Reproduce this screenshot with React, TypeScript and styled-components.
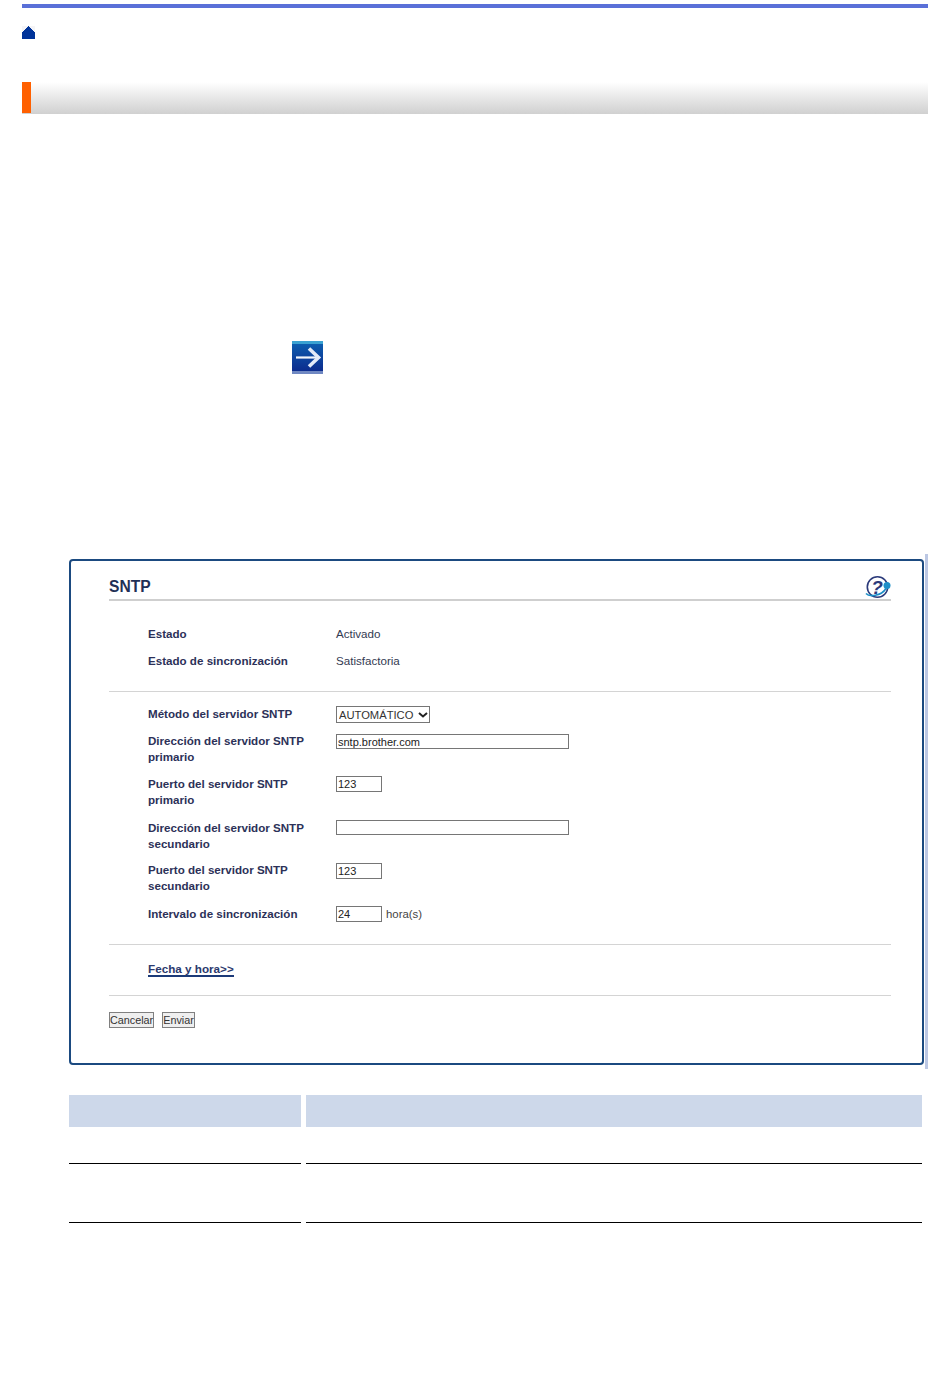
import React from "react";
import styled, { createGlobalStyle } from "styled-components";

const GlobalStyle = createGlobalStyle`
  html, body {
    margin: 0;
    padding: 0;
    background: #fff;
  }
  body {
    font-family: "Liberation Sans", Arial, sans-serif;
  }
`;

const Page = styled.div`
  box-sizing: border-box;
  width: 950px;
  min-height: 1387px;
  padding: 4px 22px 0;
`;

const TopBar = styled.div`
  height: 4px;
  background: #5a70d8;
`;

const HomeLink = styled.div`
  display: flex;
  margin-top: 18px;
  height: 13px;
`;

const TitleBar = styled.div`
  display: flex;
  margin-top: 43px;
  height: 32px;
  background: linear-gradient(#fff, #d0d0d0);
`;

const TitleMark = styled.div`
  width: 9px;
  height: 31px;
  background: #ff6000;
`;

const StepIcon = styled.div`
  display: flex;
  margin: 227px 0 0 270px;
  height: 33px;
`;

const PanelFrame = styled.div`
  box-sizing: border-box;
  width: 859px;
  margin: 180px 0 0 47px;
  padding: 5px 0 4px;
  border-right: 3px solid #bcc8e4;
`;

const Panel = styled.section`
  box-sizing: border-box;
  width: 855px;
  height: 506px;
  padding: 0 31px 0 38px;
  border: 2px solid #1b4a80;
  border-radius: 4px;
`;

const PanelHeader = styled.header`
  display: flex;
  justify-content: space-between;
  align-items: flex-end;
  height: 38px;
  border-bottom: 2px solid #cfcfcf;
`;

const PanelTitle = styled.h2`
  margin: 0 0 2px;
  font-size: 15.600px;
  line-height: 20px;
  font-weight: 700;
  color: #1f3056;
`;

const HelpMark = styled.text`
  font-family: "Liberation Sans", Arial, sans-serif;
  font-size: 19px;
  font-style: italic;
  font-weight: 700;
  fill: #2b3a7a;
  text-anchor: middle;
`;

const StatusBlock = styled.div`
  padding: 25px 0 22px;
  border-bottom: 1px solid #d4d4d4;
`;

const FormBlock = styled.div`
  padding: 14px 0 22px;
  border-bottom: 1px solid #d4d4d4;
`;

const Row = styled.div<{ $top?: number }>`
  display: grid;
  grid-template-columns: 188px 1fr;
  margin-top: ${(p) => p.$top ?? 0}px;
  padding-left: 39px;
`;

const Label = styled.div`
  display: flex;
  flex-direction: column;
  font-size: 11.600px;
  line-height: 16px;
  font-weight: 700;
  color: #2c3158;
`;

const Value = styled.div`
  font-size: 11.600px;
  line-height: 16px;
  color: #333a52;
`;

const Field = styled.div<{ $top: number }>`
  display: flex;
  align-items: flex-start;
  margin-top: ${(p) => p.$top}px;
`;

const SelectWrap = styled.div`
  position: relative;
  display: flex;
  width: 94px;
  height: 17px;
`;

const ModeSelect = styled.select`
  box-sizing: border-box;
  width: 100%;
  height: 100%;
  padding: 0 0 0 2px;
  appearance: none;
  font-family: "Liberation Sans", Arial, sans-serif;
  font-size: 11.200px;
  color: #333;
  background: #fff;
  border: 1px solid #767676;
  border-radius: 0;
`;

const SelectChevron = styled.svg`
  position: absolute;
  top: 6px;
  right: 2px;
  pointer-events: none;
`;

const TextField = styled.input<{ $wide?: boolean }>`
  box-sizing: border-box;
  width: ${(p) => (p.$wide ? 233 : 46)}px;
  height: ${(p) => (p.$wide ? 15 : 16)}px;
  padding: 0 1px;
  font-family: "Liberation Sans", Arial, sans-serif;
  font-size: 11px;
  color: #222;
  background: #fff;
  border: 1px solid #767676;
  border-radius: 0;
  outline: none;
`;

const Unit = styled.span`
  margin-left: 4px;
  font-size: 11.400px;
  line-height: 16px;
  color: #444;
`;

const LinkBlock = styled.div`
  padding: 17px 0 18px 39px;
  line-height: 14px;
  border-bottom: 1px solid #d4d4d4;
`;

const DateLink = styled.a`
  display: block;
  width: fit-content;
  font-size: 11.700px;
  line-height: 13px;
  font-weight: 700;
  color: #2c3a6e;
  text-decoration: none;
  border-bottom: 2px solid #1c3a78;
`;

const Actions = styled.div`
  display: flex;
  gap: 8px;
  margin-top: 16px;
`;

const ActionButton = styled.button`
  box-sizing: border-box;
  height: 16px;
  padding: 0;
  font-family: "Liberation Sans", Arial, sans-serif;
  font-size: 10.800px;
  line-height: 14px;
  color: #333;
  background: #efefef;
  border: 1px solid #808080;
  border-radius: 0;
`;

const ParamTable = styled.div`
  display: grid;
  grid-template-columns: 232px 616px;
  column-gap: 5px;
  margin: 26px 0 0 47px;
`;

const HeadCell = styled.div`
  height: 32px;
  background: #cdd8ea;
`;

const BodyCell = styled.div<{ $height: number }>`
  box-sizing: border-box;
  height: ${(p) => p.$height}px;
  border-bottom: 1px solid #000;
`;

type FormRowData = {
  label: string[];
  top: number;
  fieldTop: number;
  field: React.ReactNode;
};

const formRows: FormRowData[] = [
  {
    label: ["Método del servidor SNTP"],
    top: 0,
    fieldTop: 0,
    field: (
      <SelectWrap>
        <ModeSelect defaultValue="auto">
          <option value="auto">AUTOMÁTICO</option>
        </ModeSelect>
        <SelectChevron width="10" height="6" viewBox="0 0 10 6">
          <path d="M1 1l4 3.500L9 1" fill="none" stroke="#222" strokeWidth="2" />
        </SelectChevron>
      </SelectWrap>
    ),
  },
  {
    label: ["Dirección del servidor SNTP", "primario"],
    top: 10,
    fieldTop: 1,
    field: <TextField $wide defaultValue="sntp.brother.com" />,
  },
  {
    label: ["Puerto del servidor SNTP", "primario"],
    top: 11,
    fieldTop: 0,
    field: <TextField defaultValue="123" />,
  },
  {
    label: ["Dirección del servidor SNTP", "secundario"],
    top: 12,
    fieldTop: 0,
    field: <TextField $wide defaultValue="" />,
  },
  {
    label: ["Puerto del servidor SNTP", "secundario"],
    top: 10,
    fieldTop: 1,
    field: <TextField defaultValue="123" />,
  },
  {
    label: ["Intervalo de sincronización"],
    top: 12,
    fieldTop: 0,
    field: (
      <>
        <TextField defaultValue="24" />
        <Unit>hora(s)</Unit>
      </>
    ),
  },
];

const HomeIcon = () => (
  <svg width="13" height="13" viewBox="0 0 13 13">
    <rect width="13" height="13" fill="#f4f4f7" />
    <path d="M6 0h1v1h1v1h1v1h1v1h1v1h1v1h1v7H0V6h1V5h1V4h1V3h1V2h1V1h1z" fill="#003399" />
  </svg>
);

const ArrowIcon = () => (
  <svg width="31" height="33" viewBox="0 0 31 33">
    <defs>
      <linearGradient id="arrowBg" x1="0" y1="0" x2="0" y2="1">
        <stop offset="0" stopColor="#0d5cae" />
        <stop offset="1" stopColor="#0c2c8e" />
      </linearGradient>
    </defs>
    <rect width="31" height="3" fill="#3aa2d2" />
    <rect y="3" width="31" height="27" fill="url(#arrowBg)" />
    <rect y="30" width="31" height="3" fill="#7088c2" />
    <path d="M4 16.500h21" stroke="#f2f6fc" strokeWidth="2.200" />
    <path d="M17 7.500l9.500 9-9.500 9" fill="none" stroke="#e4ebf8" strokeWidth="3.600" />
  </svg>
);

const HelpIcon = () => (
  <svg width="26" height="24" viewBox="0 0 26 24">
    <circle cx="12.500" cy="12" r="10.200" fill="#fff" stroke="#2b3a7a" strokeWidth="1.600" />
    <path d="M1 18.500c3 3.500 15 3 20-5" fill="none" stroke="#1c8fc8" strokeWidth="1.600" />
    <circle cx="22" cy="10.500" r="3.500" fill="#1c8fc8" />
    <HelpMark x="12" y="18.500">?</HelpMark>
  </svg>
);

export default function App() {
  return (
    <Page>
      <GlobalStyle />
      <TopBar />
      <HomeLink>
        <HomeIcon />
      </HomeLink>
      <TitleBar>
        <TitleMark />
      </TitleBar>
      <StepIcon>
        <ArrowIcon />
      </StepIcon>

      <PanelFrame>
        <Panel>
          <PanelHeader>
            <PanelTitle>SNTP</PanelTitle>
            <HelpIcon />
          </PanelHeader>

          <StatusBlock>
            <Row>
              <Label>Estado</Label>
              <Value>Activado</Value>
            </Row>
            <Row $top={11}>
              <Label>Estado de sincronización</Label>
              <Value>Satisfactoria</Value>
            </Row>
          </StatusBlock>

          <FormBlock>
            {formRows.map((row) => (
              <Row key={row.label.join(" ")} $top={row.top}>
                <Label>
                  {row.label.map((line) => (
                    <span key={line}>{line}</span>
                  ))}
                </Label>
                <Field $top={row.fieldTop}>{row.field}</Field>
              </Row>
            ))}
          </FormBlock>

          <LinkBlock>
            <DateLink href="#">Fecha y hora&gt;&gt;</DateLink>
          </LinkBlock>

          <Actions>
            <ActionButton type="button">Cancelar</ActionButton>
            <ActionButton type="button">Enviar</ActionButton>
          </Actions>
        </Panel>
      </PanelFrame>

      <ParamTable>
        <HeadCell />
        <HeadCell />
        <BodyCell $height={37} />
        <BodyCell $height={37} />
        <BodyCell $height={59} />
        <BodyCell $height={59} />
      </ParamTable>
    </Page>
  );
}
